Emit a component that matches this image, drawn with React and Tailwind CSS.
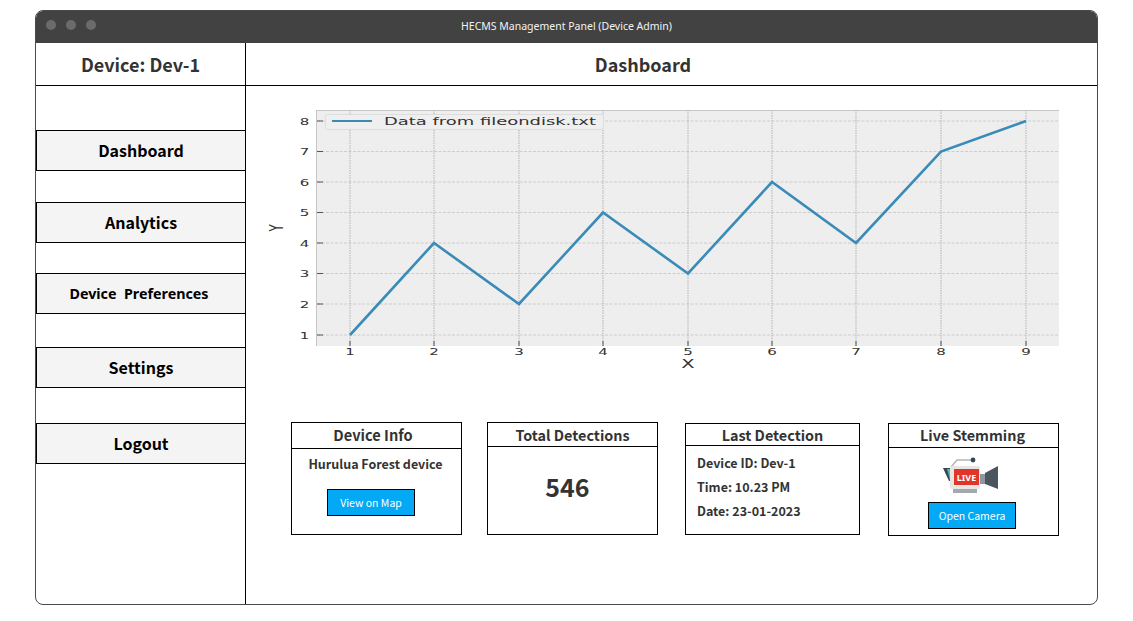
import React from "react";

const navItems = [
  { label: "Dashboard", space: "mt-[44px]" },
  { label: "Analytics", space: "mt-[31px]" },
  { label: "Device  Preferences", space: "mt-[30px]", small: true },
  { label: "Settings", space: "mt-[33px]" },
  { label: "Logout", space: "mt-[35px]" },
];

// data series from the chart, already in page pixels
const xTicks = [350, 434, 519, 603, 688, 772, 856, 941, 1026];
const yTicks = [335, 304, 273.5, 243, 212.5, 182, 151.5, 121];
const series = [1, 4, 2, 5, 3, 6, 4, 7, 8];

const Chart = () => {
  const points = series.map((v, i) => `${xTicks[i]},${yTicks[v - 1]}`).join(" ");

  return (
    <svg viewBox="265 105 800 270" className="block w-[800px] h-[270px] font-['DejaVu_Sans',sans-serif]">
      <rect x="316" y="110" width="743" height="236" fill="#eeeeee" />
      <path d="M316 110.5H1059M316.5 110V346" stroke="#c6c6c6" strokeWidth="1" fill="none" />

      {/* GRID */}
      {yTicks.map((y) => (
        <g key={y}>
          <line x1="317" x2="1059" y1={y} y2={y} stroke="#c4c4c4" strokeWidth="0.8" strokeDasharray="3 1.5" />
          <line x1="317" x2="323" y1={y} y2={y} stroke="#555555" strokeWidth="1" />
        </g>
      ))}
      {xTicks.map((x) => (
        <g key={x}>
          <line x1={x} x2={x} y1="110" y2="346" stroke="#c4c4c4" strokeWidth="1.4" strokeDasharray="1.5 1" />
          <line x1={x} x2={x} y1="341" y2="346" stroke="#555555" strokeWidth="1" />
        </g>
      ))}

      {/* LINE */}
      <polyline points={points} fill="none" stroke="#3a8bb8" strokeWidth="2.6" strokeLinejoin="miter" />

      {/* LEGEND */}
      <rect x="325.5" y="114.5" width="278" height="15" rx="2" fill="#efefef" stroke="#dddddd" />
      <line x1="332" x2="372" y1="121" y2="121" stroke="#3a8bb8" strokeWidth="2" />
      <text x="384" y="125" fontSize="11" textLength="212" lengthAdjust="spacingAndGlyphs" fill="#333333">
        Data from fileondisk.txt
      </text>

      {/* AXIS LABELS */}
      {yTicks.map((y, i) => (
        <text key={y} x="0" y="0" transform={`translate(304.5 ${y + 3.5}) scale(1.5 0.9)`} textAnchor="middle" fontSize="10" fill="#333333">
          {i + 1}
        </text>
      ))}
      {xTicks.map((x, i) => (
        <text key={x} x="0" y="0" transform={`translate(${x} 355) scale(1.5 0.9)`} textAnchor="middle" fontSize="10" fill="#333333">
          {i + 1}
        </text>
      ))}
      <text x="0" y="0" transform="translate(688 368) scale(1.5 0.9)" textAnchor="middle" fontSize="13" fill="#333333">
        X
      </text>
      <text x="0" y="0" transform="translate(283 228) rotate(-90) scale(0.9 1.5)" textAnchor="middle" fontSize="13" fill="#333333">
        Y
      </text>
    </svg>
  );
};

const LiveCamera = () => (
  <svg viewBox="0 0 58 38" className="block w-[58px] h-[38px]">
    <path d="M1 11H9L13 24H7Z" fill="#37474f" />
    <path d="M5 12H11L13 23H8Z" fill="#4db6c6" />
    <path d="M9 10L15 3H31" fill="none" stroke="#b5b5b5" strokeWidth="1.5" />
    <circle cx="31" cy="3" r="2.4" fill="#37474f" />
    <rect x="8" y="9" width="30" height="23" rx="2" fill="#e6e6e6" />
    <rect x="11" y="32" width="24" height="4" fill="#a5a8aa" />
    <rect x="38" y="17" width="5" height="10" fill="#90979c" />
    <path d="M43 16L56 9V32L43 27Z" fill="#4a5560" />
    <rect x="12" y="12" width="25" height="16" fill="#e0362a" />
    <text x="24.5" y="23.5" textAnchor="middle" fontSize="9" fontWeight="700" fill="#ffffff" className="font-['Noto_Sans',sans-serif]">
      LIVE
    </text>
  </svg>
);

const Card = ({ title, titleClass, className, children }) => (
  <div className={`border border-black flex flex-col ${className}`}>
    <div className={`${titleClass} flex items-center justify-center border-b border-black font-semibold text-[#333333]`}>
      {title}
    </div>
    {children}
  </div>
);

const BlueButton = ({ children }) => (
  <button className="w-[88px] h-[27px] bg-[#03a9f4] border border-black text-white text-[10.5px]">
    {children}
  </button>
);

const App = () => {
  return (
    <div className="w-[1133px] h-[621px] bg-white pt-[10px] pl-[35px] font-['Noto_Sans_CJK_SC','Noto_Sans',sans-serif]">
      <div className="w-[1063px] h-[595px] flex flex-col rounded-lg border border-[#4a4a4a] overflow-hidden">
        {/* TITLE BAR */}
        <div className="relative h-[32px] bg-[#424242] flex items-center justify-center">
          <div className="absolute left-[10px] top-[9px] flex gap-[10px]">
            <span className="w-[10px] h-[10px] rounded-full bg-[#6b6b6b]"></span>
            <span className="w-[10px] h-[10px] rounded-full bg-[#6b6b6b]"></span>
            <span className="w-[10px] h-[10px] rounded-full bg-[#6b6b6b]"></span>
          </div>
          <span className="pb-[1px] text-[10.5px] text-[#f2f2f2] font-['Noto_Sans',sans-serif]">HECMS Management Panel (Device Admin)</span>
        </div>

        {/* HEADER ROW */}
        <div className="h-[43px] flex border-b border-black">
          <div className="w-[210px] pt-[1px] border-r border-black flex items-center justify-center text-[18px] font-bold text-[#333333]">
            Device: Dev-1
          </div>
          <div className="flex-1 pt-[1px] pr-[57px] flex items-center justify-center text-[18px] font-bold text-[#333333]">
            Dashboard
          </div>
        </div>

        <div className="flex-1 flex">
          {/* SIDEBAR */}
          <div className="w-[210px] border-r border-black">
            {navItems.map((item) => (
              <div
                key={item.label}
                className={`${item.space} h-[41px] bg-[#f4f4f4] border-y border-l border-black flex items-center justify-center text-black whitespace-pre ${
                  item.small ? "text-[14.3px] font-bold font-['Noto_Sans',sans-serif] pr-[4px]" : "text-[16px] font-semibold pb-[2px]"
                }`}
              >
                {item.label}
              </div>
            ))}
          </div>

          {/* MAIN */}
          <div className="flex-1 pl-[19px] pt-[19px]">
            <Chart />
            <div className="mt-[47px] ml-[26px] flex items-start">
              <Card title="Device Info" titleClass="h-[26px] text-[14.6px] pb-[1px] pr-[7px]" className="w-[171px] h-[113px]">
                <p className="mt-[6px] pr-[2px] text-center text-[12.5px] font-semibold text-[#333333]">Hurulua Forest device</p>
                <div className="mt-[14px] ml-[35px]">
                  <BlueButton>View on Map</BlueButton>
                </div>
              </Card>

              <Card title="Total Detections" titleClass="h-[24px] text-[14.4px]" className="ml-[25px] w-[171px] h-[113px]">
                <p className="mt-[21px] pr-[10px] text-center text-[25px] font-bold text-[#333333]">546</p>
              </Card>

              <Card title="Last Detection" titleClass="h-[22px] text-[14.4px]" className="ml-[27px] mt-px w-[175px] h-[112px]">
                <div className="pl-[11px] pt-[7px] flex flex-col gap-[4px] text-[12.5px] font-semibold leading-[20px] text-[#333333]">
                  <p>Device ID: Dev-1</p>
                  <p>Time: 10.23 PM</p>
                  <p>Date: 23-01-2023</p>
                </div>
              </Card>

              <Card title="Live Stemming" titleClass="h-[24px] text-[14.4px] pb-[1px] pr-[2px]" className="ml-[28px] mt-px w-[171px] h-[113px]">
                <div className="flex flex-col items-center">
                  <div className="mt-[9px] mr-[6px]">
                    <LiveCamera />
                  </div>
                  <div className="mt-[6px] mr-[3px]">
                    <BlueButton>Open Camera</BlueButton>
                  </div>
                </div>
              </Card>
            </div>
          </div>
        </div>
      </div>
    </div>
  );
};

export default App;
